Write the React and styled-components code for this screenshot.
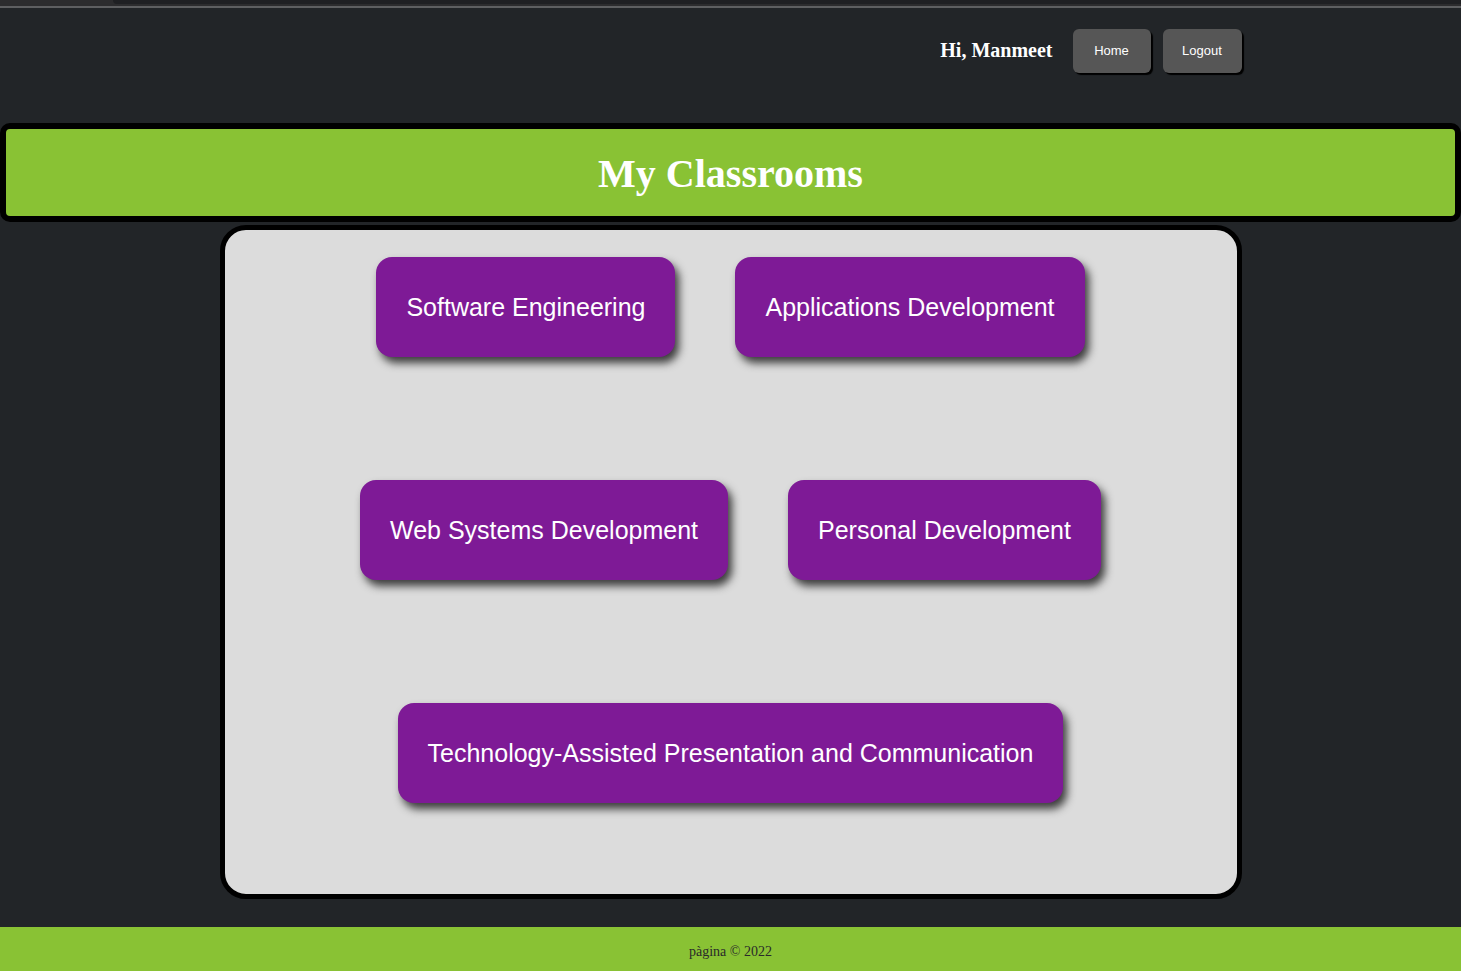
import React from "react";
import styled, { createGlobalStyle } from "styled-components";

const Global = createGlobalStyle`
  html, body { margin: 0; padding: 0; }
  body {
    background: #222528;
    font-family: "Liberation Serif", "Times New Roman", serif;
  }
`;

const Page = styled.div`
  min-height: 971px;
  display: flex;
  flex-direction: column;
`;

const TopStrip = styled.div`
  height: 6px;
  background: #2c2c2e;
  border-bottom: 2px solid #5e5f61;
  display: flex;
  justify-content: flex-end;
`;

const TabShape = styled.div`
  width: 1348px;
  height: 4px;
  background: #1f2023;
  border-bottom-left-radius: 6px;
`;

const Header = styled.header`
  width: 1022px;
  margin: 0 auto;
  height: 84px;
  display: flex;
  align-items: center;
  justify-content: flex-end;
  gap: 20px;
  padding-top: 1px;
  box-sizing: border-box;
`;

const Greeting = styled.span`
  color: #ffffff;
  font-family: "Liberation Serif", "Times New Roman", serif;
  font-weight: bold;
  font-size: 20px;
`;

const NavGroup = styled.div`
  display: flex;
  gap: 12px;
`;

const NavButton = styled.button`
  height: 44px;
  width: ${(p) => p.$w}px;
  background: #565656;
  color: #ffffff;
  border: none;
  border-radius: 6px;
  box-shadow: 2px 2px 1px #000;
  font-family: "Liberation Sans", Arial, sans-serif;
  font-size: 13px;
  cursor: pointer;
`;

const Banner = styled.div`
  margin-top: 31px;
  height: 99px;
  box-sizing: border-box;
  background: #89c234;
  border: 6px solid #000;
  border-radius: 10px;
  display: flex;
  align-items: center;
  justify-content: center;
`;

const Title = styled.h1`
  margin: 0;
  color: #ffffff;
  font-family: "Liberation Serif", "Times New Roman", serif;
  font-weight: bold;
  font-size: 40px;
  padding-top: 2px;
`;

const Panel = styled.main`
  width: 1022px;
  height: 674px;
  margin: 3px auto 0;
  box-sizing: border-box;
  background: #dcdcdc;
  border: 5px solid #000;
  border-radius: 26px;
  display: flex;
  flex-direction: column;
  align-items: center;
  padding-top: 27px;
  gap: 123px;
`;

const Row = styled.div`
  display: flex;
  gap: 60px;
  justify-content: center;
`;

const ClassButton = styled.button`
  height: 100px;
  padding: 0 30px;
  background: #7e1a96;
  color: #ffffff;
  border: none;
  border-radius: 16px;
  box-shadow: 4px 6px 9px #3c3c3c;
  font-family: "Liberation Sans", Arial, sans-serif;
  font-size: 25px;
  white-space: nowrap;
  cursor: pointer;
`;

const Footer = styled.footer`
  margin-top: 28px;
  height: 44px;
  box-sizing: border-box;
  padding-top: 5px;
  background: #89c234;
  display: flex;
  align-items: center;
  justify-content: center;
  color: #2a2a2a;
  font-family: "Liberation Serif", "Times New Roman", serif;
  font-size: 14px;
`;

const rows = [
  ["Software Engineering", "Applications Development"],
  ["Web Systems Development", "Personal Development"],
  ["Technology-Assisted Presentation and Communication"],
];

export default function App() {
  return (
    <Page>
      <Global />
      <TopStrip>
        <TabShape />
      </TopStrip>
      <Header>
        <Greeting>Hi, Manmeet</Greeting>
        <NavGroup>
          <NavButton $w={78}>Home</NavButton>
          <NavButton $w={79}>Logout</NavButton>
        </NavGroup>
      </Header>
      <Banner>
        <Title>My Classrooms</Title>
      </Banner>
      <Panel>
        {rows.map((r, i) => (
          <Row key={i}>
            {r.map((name) => (
              <ClassButton key={name}>{name}</ClassButton>
            ))}
          </Row>
        ))}
      </Panel>
      <Footer>pàgina © 2022</Footer>
    </Page>
  );
}
